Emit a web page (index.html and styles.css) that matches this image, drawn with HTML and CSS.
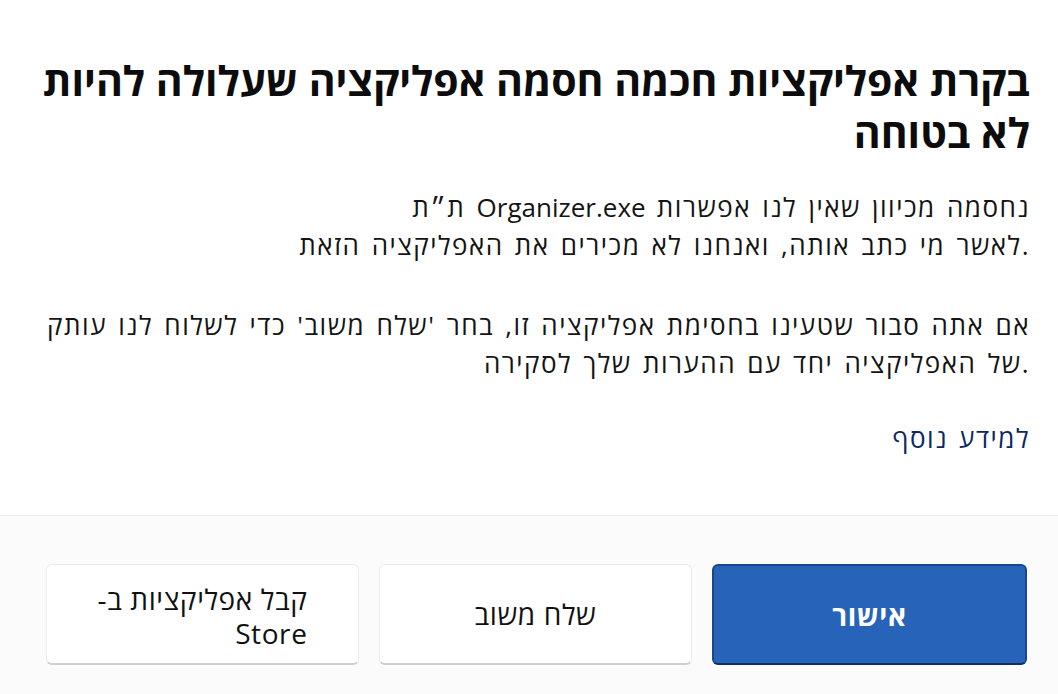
FILE: index.html
```html
<!DOCTYPE html>
<html lang="he">
<head>
<meta charset="utf-8">
<title>בקרת אפליקציות חכמה</title>
<link rel="stylesheet" href="styles.css">
</head>
<body>
<div class="dialog">
  <main class="content">
    <h1 class="title" dir="rtl">בקרת אפליקציות חכמה חסמה אפליקציה שעלולה להיות לא בטוחה</h1>
    <div class="para">
      <div class="line" dir="ltr">ת״ת <span class="latin">Organizer.exe</span> נחסמה מכיוון שאין לנו אפשרות</div>
      <div class="line" dir="ltr">לאשר מי כתב אותה, ואנחנו לא מכירים את האפליקציה הזאת.</div>
    </div>
    <div class="para">
      <div class="line" dir="ltr">אם אתה סבור שטעינו בחסימת אפליקציה זו, בחר 'שלח משוב' כדי לשלוח לנו עותק</div>
      <div class="line" dir="ltr">של האפליקציה יחד עם ההערות שלך לסקירה.</div>
    </div>
    <div class="link-row" dir="rtl"><a class="link" href="#">למידע נוסף</a></div>
  </main>
  <footer class="footer" dir="rtl">
    <button class="btn btn-primary">אישור</button>
    <button class="btn">שלח משוב</button>
    <button class="btn"><span class="btn-lines"><span class="btn-line">קבל אפליקציות ב-</span><span class="btn-line">Store</span></span></button>
  </footer>
</div>
</body>
</html>
```
FILE: styles.css
```css
html, body {
  margin: 0;
  padding: 0;
  background: #ffffff;
}
body {
  font-family: "Open Sans", "Liberation Sans", "DejaVu Sans", sans-serif;
  color: #111111;
  width: 1058px;
  height: 694px;
  overflow: hidden;
}
.dialog {
  display: flex;
  flex-direction: column;
  height: 694px;
}
.content {
  padding: 54px 28px 0 20px;
  height: 515px;
  box-sizing: border-box;
}
.title {
  margin: 0;
  font-size: 41px;
  line-height: 52px;
  font-weight: 700;
  text-align: right;
  color: #0c0c0c;
  letter-spacing: 0;
}
.para {
  margin-top: 30px;
  font-size: 26px;
  line-height: 38px;
  letter-spacing: 1.5px;
  word-spacing: 3px;
  text-align: right;
  color: #141414;
}
.para + .para {
  margin-top: 42px;
}
.line {
  text-align: right;
  white-space: nowrap;
}
.latin {
  letter-spacing: 0;
}
.link-row {
  margin-top: 37px;
  font-size: 26px;
  line-height: 38px;
  letter-spacing: 1.5px;
  word-spacing: 3px;
  text-align: right;
}
.link {
  color: #0b2a5e;
  text-decoration: none;
}
.footer {
  flex: 1;
  border-top: 1px solid #efefef;
  background: #fbfbfb;
  display: flex;
  gap: 20px;
  padding: 48px 31px 0 46px;
  box-sizing: border-box;
  align-items: flex-start;
}
.btn {
  flex: 1;
  height: 101px;
  border: 1px solid #ececec;
  border-bottom: 2px solid #cfcfcf;
  border-radius: 6px;
  background: #ffffff;
  font-family: inherit;
  font-size: 28px;
  line-height: 34px;
  letter-spacing: 0.6px;
  color: #111111;
  display: flex;
  align-items: center;
  justify-content: center;
  padding: 0;
  box-sizing: border-box;
}
.btn-primary {
  background: #2763b9;
  border: 2px solid #1a4690;
  border-bottom-color: #102e63;
  color: #ffffff;
  font-weight: 700;
}
.btn-lines {
  display: flex;
  flex-direction: column;
  align-items: flex-start;
  margin-top: 4px;
}
.btn-line {
  display: block;
  line-height: 34px;
}
```
